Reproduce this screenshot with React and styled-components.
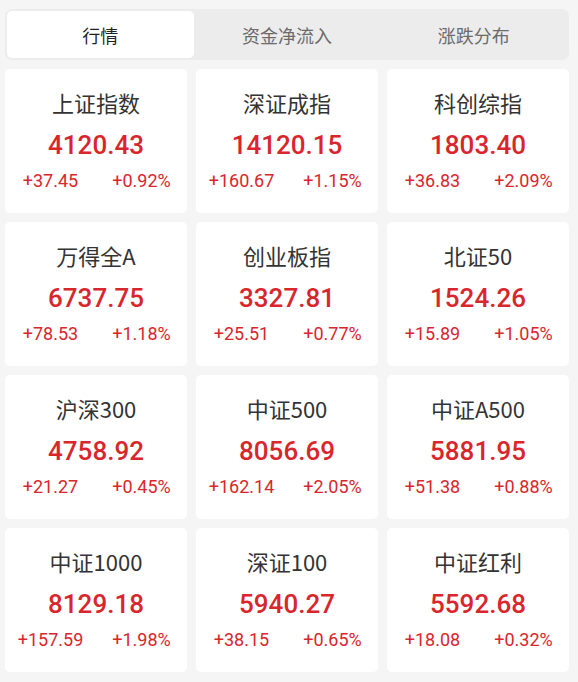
import React, { useState } from "react"
import styled, { createGlobalStyle } from "styled-components"

const GlobalStyle = createGlobalStyle`
  html, body {
    margin: 0;
    padding: 0;
    background: #f5f5f5;
  }
  body {
    font-family: Roboto, "Noto Sans CJK SC", sans-serif;
  }
`

const StyledPage = styled.div`
  display: flex;
  flex-direction: column;
  gap: 9px;
  padding: 9px 9px 7px 5px;
  width: 564px;
`

const StyledTabBar = styled.div`
  display: flex;
  flex-direction: row;
  padding: 2px;
  height: 47px;
  background: #ececec;
  border-radius: 7px;
`

const StyledTab = styled.div`
  flex: 1;
  display: flex;
  align-items: center;
  justify-content: center;
  border-radius: 5px;
  font-family: "Noto Sans CJK SC", sans-serif;
  font-size: 18px;
  color: ${({ active }) => (active ? "#1f1f1f" : "#6b6b6b")};
  background: ${({ active }) => (active ? "#ffffff" : "transparent")};
  cursor: pointer;
  user-select: none;
`

const StyledGrid = styled.div`
  display: grid;
  grid-template-columns: repeat(3, 1fr);
  gap: 9px;
`

const StyledCard = styled.div`
  display: flex;
  flex-direction: column;
  align-items: center;
  height: 144px;
  background: #ffffff;
  border-radius: 5px;
`

const StyledName = styled.div`
  margin-top: 18px;
  height: 30px;
  line-height: 30px;
  font-family: "Noto Sans CJK SC", sans-serif;
  font-size: 22px;
  color: #333333;
`

const StyledPrice = styled.div`
  margin-top: 11px;
  height: 34px;
  line-height: 34px;
  font-family: Roboto, sans-serif;
  font-weight: 500;
  font-size: 26px;
  color: #d9262c;
`

const StyledChangeRow = styled.div`
  display: flex;
  flex-direction: row;
  align-self: stretch;
  margin-top: 6px;
`

const StyledChange = styled.div`
  flex: 1;
  text-align: center;
  height: 26px;
  line-height: 26px;
  font-family: Roboto, sans-serif;
  font-size: 18px;
  color: #d9262c;
`

const tabs = ["行情", "资金净流入", "涨跌分布"]

const indices = [
  { name: "上证指数", price: "4120.43", diff: "+37.45", pct: "+0.92%" },
  { name: "深证成指", price: "14120.15", diff: "+160.67", pct: "+1.15%" },
  { name: "科创综指", price: "1803.40", diff: "+36.83", pct: "+2.09%" },
  { name: "万得全A", price: "6737.75", diff: "+78.53", pct: "+1.18%" },
  { name: "创业板指", price: "3327.81", diff: "+25.51", pct: "+0.77%" },
  { name: "北证50", price: "1524.26", diff: "+15.89", pct: "+1.05%" },
  { name: "沪深300", price: "4758.92", diff: "+21.27", pct: "+0.45%" },
  { name: "中证500", price: "8056.69", diff: "+162.14", pct: "+2.05%" },
  { name: "中证A500", price: "5881.95", diff: "+51.38", pct: "+0.88%" },
  { name: "中证1000", price: "8129.18", diff: "+157.59", pct: "+1.98%" },
  { name: "深证100", price: "5940.27", diff: "+38.15", pct: "+0.65%" },
  { name: "中证红利", price: "5592.68", diff: "+18.08", pct: "+0.32%" },
]

export default function App() {
  const [tab, setTab] = useState(0)

  return (
    <>
      <GlobalStyle />
      <StyledPage>
        <StyledTabBar>
          {tabs.map((t, i) => (
            <StyledTab key={t} active={i === tab} onClick={() => setTab(i)}>
              {t}
            </StyledTab>
          ))}
        </StyledTabBar>
        <StyledGrid>
          {indices.map(item => (
            <StyledCard key={item.name}>
              <StyledName>{item.name}</StyledName>
              <StyledPrice>{item.price}</StyledPrice>
              <StyledChangeRow>
                <StyledChange>{item.diff}</StyledChange>
                <StyledChange>{item.pct}</StyledChange>
              </StyledChangeRow>
            </StyledCard>
          ))}
        </StyledGrid>
      </StyledPage>
    </>
  )
}
